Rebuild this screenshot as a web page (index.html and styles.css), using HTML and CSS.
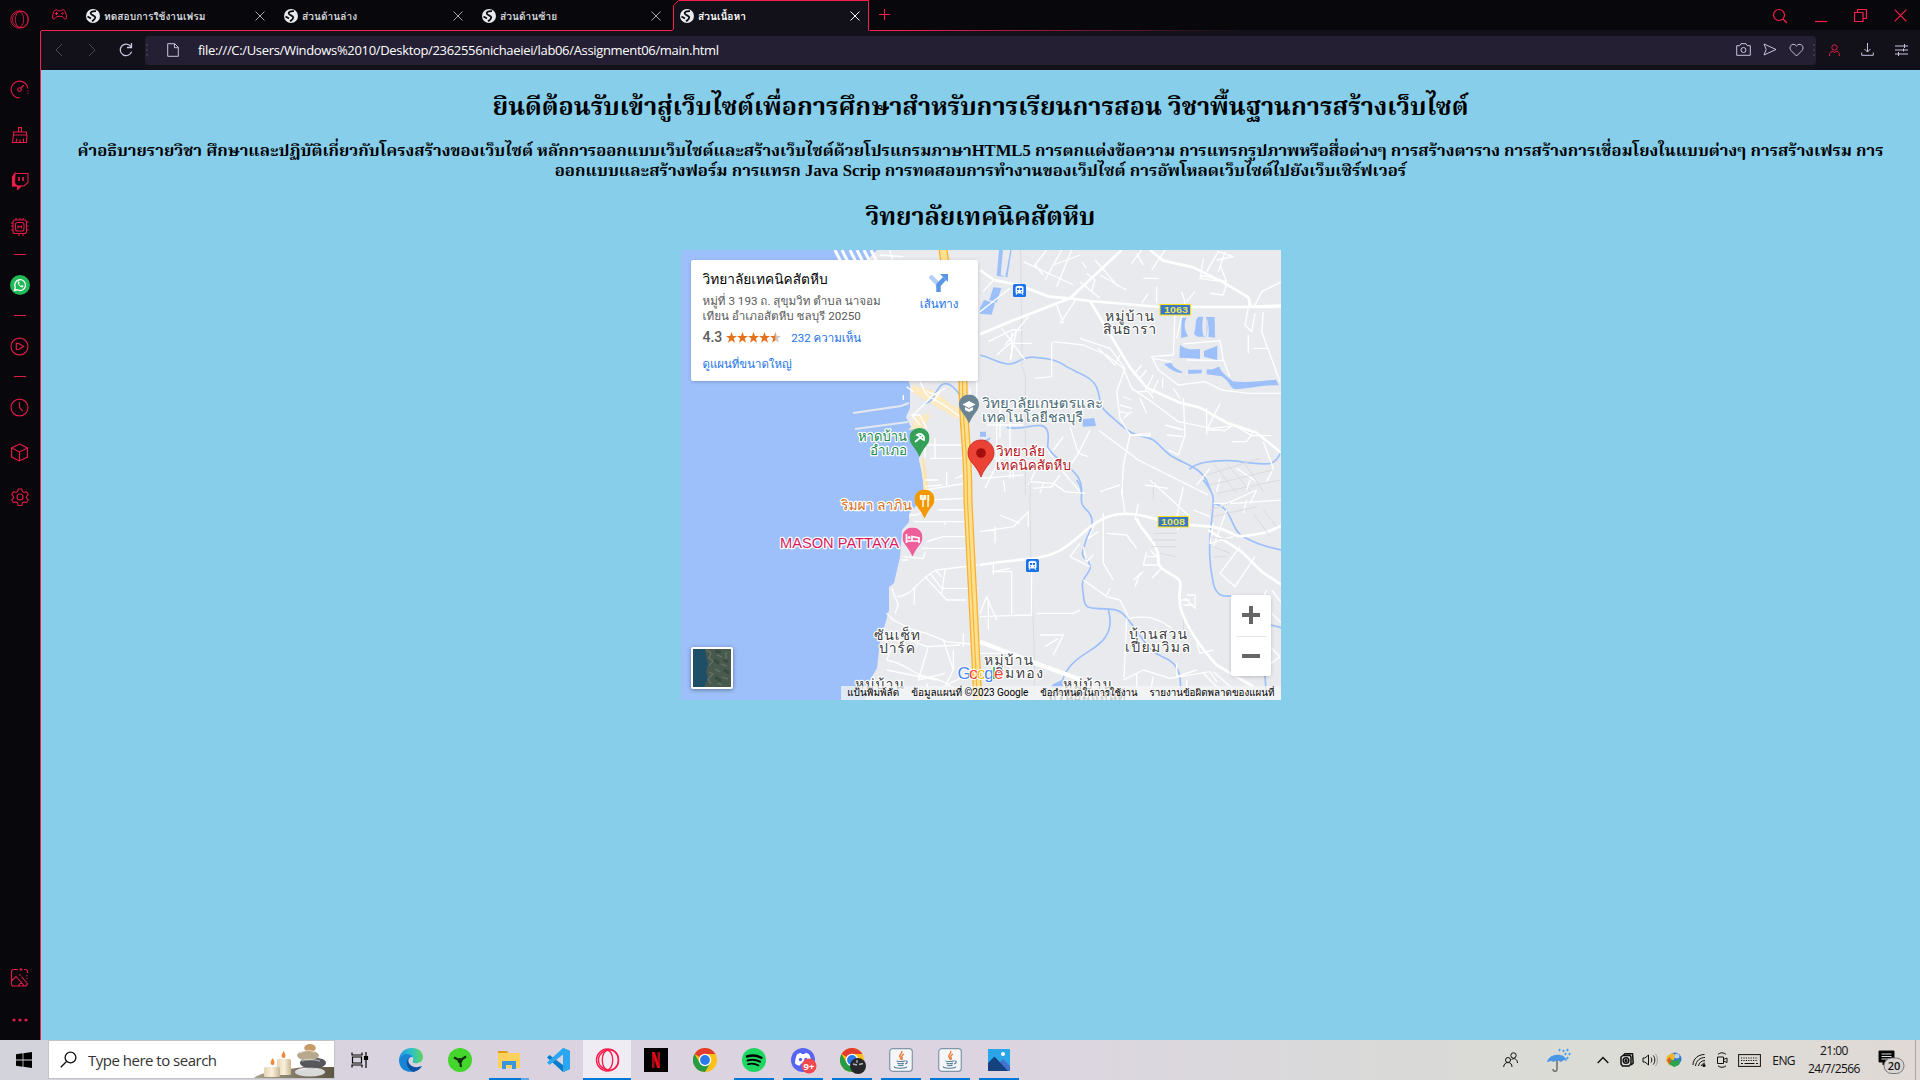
FILE: index.html
```html
<!DOCTYPE html>
<html lang="th">
<head>
<meta charset="utf-8">
<title>ส่วนเนื้อหา</title>
<link rel="stylesheet" href="styles.css">
</head>
<body>
<svg class="defs" width="0" height="0">
  <symbol id="x" viewBox="0 0 12 12"><path d="M1.5 1.5l9 9m0-9l-9 9"/></symbol>
  <symbol id="globe" viewBox="0 0 14 14"><circle cx="7" cy="7" r="7" fill="#e8eaed" stroke="none"/><path d="M10 2.200C6 2 4.200 3.200 4.800 4.800S9.500 6.500 9.300 8.500 7.500 11 6 12.300M1.500 7.500L5 9.500" stroke="#0a0a10" stroke-width="1.800" fill="none"/></symbol>
  <symbol id="opera" viewBox="0 0 24 24"><circle cx="12" cy="12" r="11"/><ellipse cx="12" cy="12" rx="5.2" ry="9.8"/><path d="M9 3c10-4 14 3 14 9s-4 13-14 9M9 3C1 7 1 17 9 21"/></symbol>
  <symbol id="chrome" viewBox="0 0 24 24"><circle cx="12" cy="12" r="12" fill="#fbc116"/><path d="M12 12L1.6 6A12 12 0 0 1 22.4 6H12z" fill="#e33b2e"/><path d="M1.6 6A12 12 0 0 0 12 24l5.2-9L12 12 6.8 15z" fill="#269a45"/><circle cx="12" cy="12" r="6.2" fill="#fff"/><circle cx="12" cy="12" r="4.9" fill="#2b78e9"/></symbol>
  <symbol id="java" viewBox="0 0 24 24"><rect x=".7" y=".7" width="22.6" height="22.6" rx="3" fill="#f5f6f7" stroke="#8296a8" stroke-width="1.2"/><path d="M12.6 3c1.800 2.600-3.600 3.800-1.400 6.400.6.8 1 1.400.6 2.200M15 6.200c-3 1.400-2.400 2.600-1.800 3.600.4.9.1 1.300-.6 2" fill="none" stroke="#e8732c" stroke-width="1.3"/><path d="M7.500 12.800c1 .9 7 .9 8.400 0M8.400 15c1.600 1 5 1 6.400 0M9 17c1.600.8 4 .8 5.600 0M16.400 13c2.600-.5 2.400 2.400-.4 3M5.400 18.400c-1.400 2.400 12 2.400 12.600.3" fill="none" stroke="#4d7896" stroke-width="1.1"/></symbol>
  <symbol id="train" viewBox="0 0 13 13"><rect width="13" height="13" rx="1.6" fill="#1a73e8"/><path d="M3 3.2C3 2 10 2 10 3.200V9H3zM4 9l-1 2m6-2l1 2" fill="#fff" stroke="#fff" stroke-width=".9"/><path d="M4 4h2.100v2H4zM6.900 4H9v2H6.900zM4 7.200h1v1H4zM8 7.200h1v1H8z" fill="#1a73e8"/></symbol>
  <symbol id="pin" viewBox="0 0 20 30"><path d="M10 0C4 0 0 4.400 0 10c0 6 5 8.500 8.500 16l1.500 3 1.500-3C15 18.500 20 16 20 10 20 4.400 16 0 10 0z"/></symbol>
</svg>

<div class="window">
  <aside class="sidebar">
    <div class="logo"><svg width="19" height="21"><use href="#opera"/></svg></div>
    <nav class="shortcuts">
      <span style="height:36px"><svg width="19" height="19" viewBox="0 0 18 18"><path d="M9 17A8 8 0 1 1 17 8M17 10v.8M17 12.500v.8M10.400 7.600L13 5"/><circle cx="9" cy="9" r="1.700"/></svg></span>
      <span style="height:56px"><svg width="18" height="18" viewBox="0 0 18 18"><path d="M7.500 6V1.500h3V6M2.500 9V6h13v3zM2.500 9l-1 7.500h14l.5-7.500M5 16.500l1-4M9 16.500v-3M12.500 16.500v-4"/></svg></span>
      <span style="height:35px"><svg width="18" height="18" viewBox="0 0 18 18"><path d="M4 1.500h13v9L13 14h-3l-3.500 3.500V14H1.500V5z"/><path d="M4 1.500L1.500 5v9h5v3.500L10 14H6L3.500 11z" fill="#fa1e4e"/><path d="M8 5v4M12 5v4" stroke-width="1.700"/></svg></span>
      <span style="height:56px"><svg width="19" height="19" viewBox="0 0 19 19"><rect x="3" y="3" width="13.500" height="13.500" rx="2"/><rect x="5.500" y="5.500" width="8.500" height="8.500" rx="2"/><path d="M8 8.200v3.200M11.400 8.200v3.200M8 9.800h3.400M6 3V1M10 3V1M13 3V1M9 19v-2.500M13 19v-2.500M3 6H1M3 9H1M3 13H1M16.500 5h2M16.500 9h2M16.500 13h2"/></svg></span>
      <i></i>
      <span style="height:60px"><svg width="20" height="20" viewBox="0 0 20 20"><circle cx="10" cy="10" r="10" fill="#21b858" stroke="none"/><path d="M4.500 15.500l.8-3A5.400 5.400 0 1 1 7.500 14.800z" stroke="#fff" stroke-width="1.300"/><path d="M7.600 7c.3 3 2.300 5 5 5.600l1-1.500-1.700-1-.9.800c-1-.5-1.700-1.300-2-2.200l.7-.8-.7-1.600z" fill="#fff" stroke="none"/></svg></span>
      <i></i>
      <span style="height:60px"><svg width="19" height="19" viewBox="0 0 18 18"><circle cx="9" cy="9" r="8"/><path d="M6 6v6l2.500-.4L13 9 8 6z"/></svg></span>
      <i></i>
      <span style="height:60px"><svg width="19" height="19" viewBox="0 0 18 18"><circle cx="9" cy="9" r="8"/><path d="M9 4v5l3 3.500"/></svg></span>
      <span style="height:30px"><svg width="19" height="19" viewBox="0 0 18 18"><path d="M9 1l7.500 3.700v8.600L9 17l-7.500-3.700V4.700zM1.500 4.700L9 8.500l7.500-3.800M9 8.500V17"/></svg></span>
      <span style="height:60px"><svg width="18" height="18" viewBox="0 0 18 18"><path d="M7.200 1h3.600l.6 2.500 1.700 1 2.400-.8 1.800 3-1.900 1.700v1.500l1.900 1.800-1.800 3-2.400-.8-1.700 1-.6 2.600H7.200l-.6-2.600-1.700-1-2.400.8-1.800-3 1.900-1.800V8.400L.7 6.700l1.800-3 2.400.8 1.700-1z"/><circle cx="9" cy="9" r="3"/></svg></span>
    </nav>
    <nav class="side-end">
      <svg width="19" height="20" viewBox="0 0 19 20"><path d="M8 1.500H3.500a2 2 0 0 0-2 2V16a2 2 0 0 0 2 2H15a2 2 0 0 0 2-2M1.500 13L6 8.500 14.500 18M8 18l4-4.500M11.500 8.500l6.500 8M14 1.500h1.500a2 2 0 0 1 2 2V5M11 0v3M9.500 1.500h3M17 7v1.500M17 10v1M10 6v2"/></svg>
      <svg width="16" height="4" viewBox="0 0 16 4"><g fill="#e01c48" stroke="none"><circle cx="2" cy="2" r="1.600"/><circle cx="8" cy="2" r="1.600"/><circle cx="14" cy="2" r="1.600"/></g></svg>
    </nav>
  </aside>

  <div class="main">
    <header class="tabs">
      <svg class="pad" width="15" height="11" viewBox="0 0 15 11"><path d="M4 .8c1.500 0 1.500 1 3.500 1s2-1 3.500-1c2 0 3.400 4 3.400 7.200 0 3-2 2.300-3 .6-.6-1-1.400-1.300-3.900-1.300s-3.300.3-3.900 1.300c-1 1.700-3 2.400-3-.6C.6 4.800 2 .8 4 .8zM4.500 3v3M3 4.500h3"/><circle cx="10.500" cy="4.500" r=".7"/></svg>
      <div class="tab"><svg width="14" height="14"><use href="#globe"/></svg><b>ทดสอบการใช้งานเฟรม</b><svg class="close" width="12" height="12"><use href="#x"/></svg></div>
      <div class="tab"><svg width="14" height="14"><use href="#globe"/></svg><b>ส่วนด้านล่าง</b><svg class="close" width="12" height="12"><use href="#x"/></svg></div>
      <div class="tab"><svg width="14" height="14"><use href="#globe"/></svg><b>ส่วนด้านซ้าย</b><svg class="close" width="12" height="12"><use href="#x"/></svg></div>
      <div class="tab active"><svg class="outline" width="198" height="31" viewBox="0 0 198 31"><path d="M0 30.500l1.500-1.500V5.500l5-5H196.500v30H198V31H1z" fill="#12111a" stroke="none"/><path d="M0 30.500l1.500-1.500V5.500l5-5H196.500v30"/></svg><svg width="14" height="14"><use href="#globe"/></svg><b>ส่วนเนื้อหา</b><svg class="close" width="12" height="12"><use href="#x"/></svg></div>
      <svg class="plus" width="11" height="11" viewBox="0 0 11 11"><path d="M5.500 0v11M0 5.500h11"/></svg>
      <div class="controls">
        <svg width="16" height="16" viewBox="0 0 16 16"><circle cx="7" cy="7" r="5.500"/><path d="M11 11l4 4"/></svg>
        <svg width="12" height="14" viewBox="0 0 12 14"><path d="M0 12.500h12"/></svg>
        <svg width="13" height="13" viewBox="0 0 13 13"><path d="M.5 3.500h8.500v9H.5zM3.500 3.500v-3h9v9H9"/></svg>
        <svg width="13" height="13" viewBox="0 0 13 13"><path d="M.7.7l11.600 11.600M12.300.7L.7 12.300"/></svg>
      </div>
    </header>
    <div class="toolbar">
      <svg class="dim" width="8" height="14" viewBox="0 0 8 14"><path d="M7 1L1 7l6 6"/></svg>
      <svg class="dim" width="8" height="14" viewBox="0 0 8 14"><path d="M1 1l6 6-6 6"/></svg>
      <svg class="reload" width="14" height="14" viewBox="0 0 14 14"><path d="M12.600 8.600A5.800 5.800 0 1 1 11.800 3.500M12.500 0v4.500H8" stroke-width="1.300"/></svg>
      <div class="address">
        <em class="grip"></em>
        <svg width="12" height="14" viewBox="0 0 12 14"><path d="M.7.7h7l3.600 3.600v9H.7zM7.400.7v4h4"/></svg>
        <span class="url">file:///C:/Users/Windows%2010/Desktop/2362556nichaeiei/lab06/Assignment06/main.html</span>
        <div class="actions">
          <svg width="15" height="13" viewBox="0 0 15 13"><path d="M.7 2.700h3l1.300-2h5l1.300 2h3v9.600H.7z"/><circle cx="7.500" cy="7" r="2.500"/></svg>
          <svg width="14" height="13" viewBox="0 0 14 13"><path d="M1 1l12 5.500L1 12l2.200-5.500z"/></svg>
          <svg width="15" height="14" viewBox="0 0 15 14"><path d="M7.500 13L2 7.500C-1 4 3.500-1.500 7.500 3c4-4.500 8.500 1 5.500 4.500z"/></svg>
          <em class="grip"></em>
        </div>
      </div>
      <div class="tools">
        <svg width="11" height="12" viewBox="0 0 11 12" class="red"><circle cx="5.500" cy="3.500" r="2.700"/><path d="M.7 12V9.500L3 7l2.500 1.500L8 7l2.300 2.500V12"/></svg>
        <svg width="13" height="13" viewBox="0 0 13 13"><path d="M6.500 0v9M3.500 6l3 3 3-3M.7 9.500v2.800h11.600V9.500"/></svg>
        <svg width="13" height="12" viewBox="0 0 13 12"><path d="M0 2h13M0 6h13M0 10h13M9.500 0v4M3.500 8v4M8.500 4.500v3"/></svg>
      </div>
    </div>

    <main class="page">
      <h2 class="welcome">ยินดีต้อนรับเข้าสู่เว็บไซต์เพื่อการศึกษาสำหรับการเรียนการสอน วิชาพื้นฐานการสร้างเว็บไซต์</h2>
      <h4><span class="l1">คำอธิบายรายวิชา ศึกษาและปฏิบัติเกี่ยวกับโครงสร้างของเว็บไซต์ หลักการออกแบบเว็บไซต์และสร้างเว็บไซต์ด้วยโปรแกรมภาษาHTML5 การตกแต่งข้อความ การแทรกรูปภาพหรือสื่อต่างๆ การสร้างตาราง การสร้างการเชื่อมโยงในแบบต่างๆ การสร้างเฟรม การ</span><span class="l2">ออกแบบและสร้างฟอร์ม การแทรก Java Scrip การทดสอบการทำงานของเว็ปไซต์ การอัพโหลดเว็บไซต์ไปยังเว็บเซิร์ฟเวอร์</span></h4>
      <h2 class="college">วิทยาลัยเทคนิคสัตหีบ</h2>

      <div class="map">
        <svg class="tiles" width="600" height="450" viewBox="681 250 600 450">
          <rect x="681" y="250" width="600" height="450" fill="#e8eaed"/>
          <path fill="#9dc0fb" d="M681 250H877L865 262 910 385V408L906 417 911 427 919 433 919 460 926 493V494L909 514V522L902 530 900 557 894 583 889 587V610L884 628 880 641 877 668 870 680 865 700H681z"/>
          <g fill="none" stroke="#fff" stroke-width="2.500">
            <path d="M835 250l6 12M842 250l6 12M850 250l6 12M857 250l6 12M864 250l6 12M871 250l6 12" stroke-width="3"/>
            <path d="M853 413l48-7 8-3M855 429l53-7" stroke="#e3e7ee" stroke-width="2.200"/>
          </g>
          <path d="M912 385l22 6 26 20-3 8-45-27zM908 430l18-17 4 3-6 12zM914 417l16-3-9 17-9-3zM944 401l15 7-2 10-18-10zM921 458l2 0 6 39-5-1z" fill="#fbeac2"/>
          <path d="M923 458l6 40-6 16" fill="none" stroke="#fae3a8" stroke-width="2"/>

          <g class="block" transform="translate(980 245) scale(.33333)">
            <path class="lake" d="M57 15l12 0-7 75 14 6 15-81h4L82 97 50 92zM40 127l24 2-14 44-22-8zM12 165l33 10-10 34-35-3v-18zM605 218l15 0c-10 20-7 40 5 56l-22 5zM650 215h20c-5 20-4 58 5 60l5-5c4-17 2-38-2-54h26l1 62-20-3c4-25-2-40-4-54-4 28 4 50-8 54h-18c-12-3-14-10-12-14 8-22-1-32 12-46zM600 300c25 18 40 12 60 12v30l-20-2-42-2zM672 318l40-16v44l-40-11zM552 356l22-2c5 14 20 19 34 27l-2 3c-20-1-40-14-54-28zM624 374h42l-1 11-40 2zM680 373c20 3 30-7 38-8 6 18 18 24 40 44 40 6 110-4 130-5l9 17c-50-2-100 14-137 10-15-12-10-20-35-37l-45-6zM308 523l35-4 5 24-40 2zM0 560h18v15H0z"/>
            <path class="river" d="M0 330c40 10 55 25 85 27s40-25 80-20 60 5 90 25 80 30 95 65 0 50 35 80 60 60 105 68 40 25 80 55 100 30 120 103M628 673c20-20 70-28 120-26s60 12 120 9c20-5 30-20 35-40M80 547c40 10 80-10 105-5s20 40 18 60 60 60 80 80 22 40 22 68M0 590c10-5 25 0 30-12"/>
            <path class="rail" d="M122 15l4 350 10 25M136 390v360"/>
            <path class="main-road" d="M0 268l100-42 170-66 60 8 210 18 363 0M270 160L425 15M330 168l60 100 60 100 50 60 100 45 60 15 80 45 90 30 73 60M510 15l40 32 90 20 90 45 75 45 7 28 91-3M0 75l42 30 75 15 90 35 63 5"/>
            <path class="road" d="M0 200l90-70M10 140l30-35M25 290l70-35 30 0M75 300l70-85M50 330l40-35 65 0M95 260v80M65 250l70 95M110 255l-20 90M200 15l-35 45 25 30M245 15l-50 90M275 15l-45 110M300 30l-80 30M130 50l150 70M305 50l15 20M320 85l25 20-10 35M360 90l80 45M345 45l70 80M300 110l60 50M290 160l-50 75M230 180l20 55M215 290v105l-50 5M220 290l90 10 70 30 50 40 25 60 60 40 80 60 100 20 70-8 50 30 60 0M300 280l90 30 45 60M355 310l50 50 15-30M435 370l-25 70 10 80 30 50-20 90-5 90M430 455l25 10M420 480l35 10M415 500l35 5M430 520l25-20M485 15l-30 40M470 25l20 35M555 15l-40 60M680 80l35-60 45 15-50 10M660 90l80 20-20-50M670 40l-10 60 65 10M735 20l-20 60M490 100h45M505 145l-20 30M530 125v50M590 280l25-110-10-30M620 170l25-30M740 115l-10 35-40-5M810 160l-15 80 20 20 10-55M905 110l-60 30-20 40M850 200l-5 60 55 150M585 200l-5 130-65 5 20 40 60 45 80-10 50 25 80 10 100 0M820 310l45 0M805 270v55M620 345l110 2-10-60-110 10M730 345l20 50M575 350l-60-10M485 360l-25 30M500 375l-25 30M520 390l-25 50M535 405l-20 40M548 400v30M580 430l20 30M475 440l30 0 15 20M480 460l20 45M610 460l5 110-20 60-30-15M555 540l55 15M560 570l50 5M680 490v80M720 475l-40 80 50 0M760 540l-30 20M820 560l-20 30-45 0M850 590l30 80-20 40M330 555l-35 70 30 10M270 545l25 80-20 30M355 555l120 90 210 105M450 570l60 3 0-8-50 5M250 575l-30 40M60 460l0 120M20 540h110M0 640h130M0 700l130-10M50 520v160M90 500v200M75 610l-60 120M100 620v80M200 610l40 60 60 70M240 690l-30 40M165 680l-20 40M650 720l40-50M720 700l-10 40M770 670l60 40"/>
            <path class="rail" d="M700 655l70 90M740 655l80 95M790 650l60 90M680 690l160-50M690 720l190-45M710 745l190-40"/>
          </g>
          <g class="block" transform="translate(980 480) scale(.33333)">
            <path class="river" d="M290 0c30 40 0 60 25 85 35 30 20 60 5 90-20 60-15 50 5 70 20 30-20 40-18 70 5 60 5 70 40 70 40 5 65-5 90 25 60 70 60 100 110 120s55 50 55 100M385 390c20 70-20 100-60 125s-70 50-80 95M670 0c30 40 35 40 25 120s-8 130 5 190c10 40 30 40 55 38M700 70c60 10 50 80 90 100s60 30 115 40M855 588l5 70M873 435l30 8"/>
            <path class="lake" d="M220 612l25-12 5 22-40 2z"/>
            <path class="rail" d="M150 0v100l3 140 10 280v140M520 0v60M610 400v60"/>
            <path class="main-road" d="M0 255c60-10 100-14 145-18 80-8 110-30 160-75s90-65 150-60 90 30 200 35 90 38 145 30 65-10 103-30M470 115c10 40 70 70 65 130 0 30 60 40 65 60s-10 50 5 90 50 100 105 160l110 65M685 150l100 65 60 60 60 40" />
            <path class="main-road highway" d="M0 485l155 60 150 55"/>
            <path class="road" d="M150 5l70 5M190 10l-10 30M160 25l60-5M220 10l35 25 60 5M70 0l5 35M0 155l100-15 45-45v45M60 105l60 25M45 190v-50M35 275h60v130M0 410l155-5 0-160M40 245v40M90 265l-50 10M0 400l20-50 30 70M25 360v90M300 190l-30 40 60 30M310 200l10 45 20-20M355 155l-30 20 20-45M370 100v150l30 50M380 160l60 5 30 40M420 15l-60 20M425 30l10 70M495 15l70 10M475 70l-10 50M510 210l20 20-30 0M540 255l-50 0 10-40M545 265l-30 30M480 280l-15 40M460 300l30-25M310 300l70 50 40 10 25 50M390 325l-10 20M440 415l-8 180M445 415c60-10 90 0 130 30M170 400l110 0 20-10M180 465h70l-30 60M235 475l-40 25M510 0l120 110M630 110l-40 40M640 90l50 20M610 20l-20 90M700 70l60 0 145-10M720 80l110-50M830 30l-20 40M810 0l-10 30M800 60l-10 40M740 90l-40 110M700 130l-10 60 70-20M780 200l-60 80 45 40 60-90M620 345l25 0v40l-30-30M600 360l30 0M610 375h30M650 490l10 30 40-10M860 330l-20 40M875 330l30 40M875 400l30 30M870 500l30 30M430 600l60-30 80 25 120-20 20 30M590 550l0 40 60-20M620 600v60M670 580l80 80M700 575l80 70M330 610l40 40 90 10M470 580l0 60M520 590l-10 50M0 520h80M90 540v50M820 590l80-60"/>
            <path class="rail" d="M520 160h70M515 180h75M515 200h75M540 220l50 10M690 90l60-20M700 110l130-30M700 200l50 20M690 170l60 10M700 230h40M820 100l50 70M850 90l40 50"/>
          </g>
          <g class="block" transform="translate(680 245) scale(.33333)">
            <path class="river" d="M845 465c-10-30-40-60-60-45s-25 55-50 55"/>
            <path class="road" d="M720 410l20 40 60 35 40 30M700 510l60-60 35-20M770 450l-30-10M760 470l20-30M680 425l20 15M670 450v15M720 540l-25-30 25 0 20 40M735 580v60M735 600h110M765 580v60M750 640h100M735 705h40M800 680v40M825 700l30-10M735 735l120-20M745 380l15 30M600 30l70 5M630 15l10 40M870 430v70M890 410v70"/>
          </g>
          <g class="block" transform="translate(680 480) scale(.33333)">
            <path class="road" d="M735 20l50-5M740 60l120-5M775 90h90M700 125h165M690 105l20 0 20-10M795 125v10M740 185l50-15h75M725 205h130M735 215l-5 20-60-5M665 240l20 0M650 350c50 0 70-60 120-80l125-15M705 320c-5 20 0 40-3 55M735 290l65 70h60M750 280l35 45h110M765 270l20 20M795 270l-10 70M635 325l20 50-10 25M620 400l20 20 60 30 40 10 60 25 100 10M600 480h90l50 20 100-5M720 460l-10 40M745 500l-30 100 80-20M640 490l-20 50M620 540c60 10 70 40 120 50s80 30 110 60M620 570l150 30M790 480l30 90-20 40M820 510v60M850 460v40M790 620l60-30M740 610l10 40M580 640l60-20"/>
          </g>

          <path d="M943 248c2 30 18 60 20 133 0 50 5 60 5 120l10 202" fill="none" stroke="#f9b02b" stroke-width="9"/>
          <path d="M943 248c2 30 18 60 20 133 0 50 5 60 5 120l10 202" fill="none" stroke="#fddf90" stroke-width="6.500"/>
          <path d="M962.500 381c0 50 5 60 5 120l10 202" fill="none" stroke="#f9b536" stroke-width="1.200"/>

          <use href="#train" x="1013" y="284" width="13" height="13"/>
          <use href="#train" x="1026" y="559" width="13" height="13"/>
          <g class="shield"><rect x="1160" y="304.500" width="30.500" height="10.500"/><text x="1164" y="313" textLength="24" lengthAdjust="spacingAndGlyphs">1063</text><rect x="1158" y="516.500" width="30.500" height="10.500"/><text x="1161" y="525" textLength="24" lengthAdjust="spacingAndGlyphs">1008</text></g>

          <g class="labels">
            <g class="town"><text x="1105" y="321" textLength="49">หมู่บ้าน</text><text x="1103" y="334" textLength="53">สินธารา</text>
            <text x="874" y="640" textLength="46">ซันเซ็ท</text><text x="879" y="653" textLength="36">ปาร์ค</text>
            <text x="1129" y="639" textLength="58">บ้านสวน</text><text x="1125" y="652" textLength="65">เปี่ยมวิมล</text>
            <text x="984" y="665" textLength="49">หมู่บ้าน</text><text x="996" y="678" textLength="47">ริมทอง</text>
            <text x="855" y="689" textLength="49">หมู่บ้าน</text><text x="1063" y="689" textLength="49">หมู่บ้าน</text><text x="1048" y="700" textLength="78">สุรนิยมแลนด์</text></g>
            <g fill="#4b6b78"><text x="982" y="408" textLength="121" lengthAdjust="spacingAndGlyphs">วิทยาลัยเกษตรและ</text><text x="982" y="422" textLength="101" lengthAdjust="spacingAndGlyphs">เทคโนโลยีชลบุรี</text></g>
            <g fill="#b3151b"><text x="996" y="456" textLength="49" lengthAdjust="spacingAndGlyphs">วิทยาลัย</text><text x="996" y="470" textLength="75" lengthAdjust="spacingAndGlyphs">เทคนิคสัตหีบ</text></g>
            <g fill="#1a8a4a"><text x="858" y="441" textLength="49" lengthAdjust="spacingAndGlyphs">หาดบ้าน</text><text x="870" y="455" textLength="37" lengthAdjust="spacingAndGlyphs">อำเภอ</text></g>
            <text x="841" y="510" fill="#d5701b" textLength="71" lengthAdjust="spacingAndGlyphs">ริมผา ลาภิน</text>
            <text class="hotel" x="780" y="548" textLength="119" lengthAdjust="spacingAndGlyphs">MASON PATTAYA</text>
          </g>
          <use href="#pin" x="909.500" y="428" width="20" height="30" fill="#34a058"/>
          <path d="M914 436.500l.1 0M915 442l7-6M917 435c4-3 8 1 7 5l-2-1-3-3z" stroke="#fff" stroke-width="1.800" fill="none"/>
          <use href="#pin" x="959" y="394.500" width="20" height="30" fill="#6b8594"/>
          <path d="M962.500 404.500l6.500-3.500 6.500 3.500-6.500 3.500zM965 407v3l4 2 4-2v-3l-4 2z" fill="#fff"/>
          <use href="#pin" x="914.500" y="489.500" width="20" height="30" fill="#f29900"/>
          <path d="M922 495v4M924 495v4M920.500 495v4h5v-4M923 499v8M928 495v12M928.500 495v6" stroke="#fff" stroke-width="1.400" fill="none"/>
          <use href="#pin" x="902.500" y="527.500" width="20" height="30" fill="#ed5e9b"/>
          <path d="M906.500 534v9M906.500 541h12.500M919 543v-5l-7-1.500v4" stroke="#fff" stroke-width="1.700" fill="none"/><circle cx="909.200" cy="537.500" r="1.500" fill="#fff"/>
          <path d="M981 440c-8 0-13 6-13 13 0 9 8 11 13 24 5-13 13-15 13-24 0-7-5-13-13-13z" fill="#ea4335" stroke="#c5221f" stroke-width=".8"/><circle cx="981" cy="453" r="4.800" fill="#a50e0e"/>
          <g class="google"><text x="957.500" y="679" textLength="46"><tspan fill="#4285f4">G</tspan><tspan fill="#ea4335">o</tspan><tspan fill="#fbbc05">o</tspan><tspan fill="#4285f4">g</tspan><tspan fill="#34a853">l</tspan><tspan fill="#ea4335">e</tspan></text></g>
        </svg>

        <section class="card">
          <div class="place">
            <h3>วิทยาลัยเทคนิคสัตหีบ</h3>
            <p class="addr"><span>หมู่ที่ 3 193 ถ. สุขุมวิท ตำบล นาจอม</span><span>เทียน อำเภอสัตหีบ ชลบุรี 20250</span></p>
            <p class="rating"><b>4.3</b><svg width="55" height="11" viewBox="0 0 55 11"><path id="st" d="M5.500 0l1.400 4H11L7.700 6.500 9 10.700 5.500 8.200 2 10.700 3.300 6.500 0 4h4.100z" fill="#e7711b"/><use href="#st" x="11"/><use href="#st" x="22"/><use href="#st" x="33"/><path d="M49.500 0l1.400 4H55l-3.300 2.500 1.300 4.200-3.500-2.500z" fill="#c8c8c8"/><path d="M49.500 0v8.200L46 10.700l1.300-4.200L44 4h4.100z" fill="#e7711b"/></svg><a class="reviews">232 ความเห็น</a></p>
            <a class="larger">ดูแผนที่ขนาดใหญ่</a>
          </div>
          <div class="route"><svg width="20" height="20" viewBox="0 0 20 20"><path d="M1 3l8 8v3" stroke="#b3d0f6" stroke-width="4.500"/><path d="M9.500 19v-7l6-6.500" stroke="#5a96e6" stroke-width="4.500"/><path d="M11 1h8v8z" fill="#5a96e6" stroke="none"/></svg><a>เส้นทาง</a></div>
        </section>

        <svg class="satellite" width="42" height="42" viewBox="0 0 42 42"><rect x="0" y="0" width="42" height="42" rx="2" fill="#fff"/><rect x="2" y="2" width="38" height="38" fill="#48594e"/><path d="M2 2h12l1 7 2 8-2 8 2 6-4 9H2z" fill="#1f4f66"/><path d="M15 3l5 3-2 5 4 3-4 5M18 25l4 2-5 5 3 5M26 8l5 2M30 17l6 2M24 22l5 3M31 30l6 2M27 36l4 2M35 5v7" stroke="#6a746b" stroke-width="1.200" fill="none"/><path d="M24 4l6 1M23 13l5 3M33 23l5 3M24 30l6 4M33 13l4 2" stroke="#374b3e" stroke-width="3" fill="none"/></svg>
        <div class="zoom"><svg width="40" height="40" viewBox="0 0 40 40"><path d="M20 11v18M11 20h18"/></svg><svg width="40" height="40" viewBox="0 0 40 40"><path d="M11 20h18"/></svg></div>
        <footer class="legal"><span class="g1">แป้นพิมพ์ลัด</span><span class="g2">ข้อมูลแผนที่ ©2023 Google</span><span class="g3">ข้อกำหนดในการใช้งาน</span><span class="g4">รายงานข้อผิดพลาดของแผนที่</span></footer>
      </div>
    </main>
  </div>
</div>

<footer class="taskbar">
  <div class="start"><svg width="16" height="16" viewBox="0 0 16 16"><path d="M0 2.300L6.600 1.300V7.600H0zM7.400 1.200L16 0v7.600H7.400zM0 8.400h6.600v6.300L0 13.700zM7.400 8.400H16V16l-8.600-1.200z"/></svg></div>
  <div class="search">
    <svg width="17" height="17" viewBox="0 0 17 17"><circle cx="10.500" cy="6.500" r="5.400" fill="none" stroke="#111" stroke-width="1.300"/><path d="M6.500 10.500L.8 16.200" stroke="#111" stroke-width="1.300"/></svg>
    <span>Type here to search</span>
    <svg class="spa" width="80" height="37" viewBox="0 0 80 37"><defs><linearGradient id="wx"><stop stop-color="#e2d2b3"/><stop offset=".5" stop-color="#fbf1dc"/><stop offset="1" stop-color="#c9b692"/></linearGradient><linearGradient id="tb"><stop stop-color="#a8a18e"/><stop offset="1" stop-color="#5d5645"/></linearGradient></defs><path d="M0 37c8-7 30-8 50-11h30v11z" fill="url(#tb)"/><rect x="23" y="18" width="14" height="16" rx="1.500" fill="url(#wx)"/><rect x="10" y="26" width="16" height="10" rx="1.500" fill="url(#wx)"/><path d="M28.500 12c-3 5 3 7 3 2.500 0-2-1.500-3-1.500-4.500zM17.500 19c-3 5 3 7 3 2.500 0-2-1.500-3-1.500-4.500z" fill="#f18a37"/><ellipse cx="56" cy="31" rx="15" ry="4.500" fill="#d9d9da"/><ellipse cx="59" cy="22" rx="13" ry="5.500" fill="#56575a"/><ellipse cx="54" cy="14.500" rx="11" ry="4.800" fill="#b7a98e"/><ellipse cx="56" cy="7" rx="5.800" ry="4" fill="#c79b66"/><path d="M48 20c8-3 14-1 18 0M46 12c4-3 10-3 14-1M45 29c8-3 14-2 19-1" stroke="#fff" stroke-opacity=".45" fill="none" stroke-width="1.500"/></svg>
  </div>
  <nav class="apps">
    <div><svg width="18" height="16" viewBox="0 0 18 16" fill="none" stroke="#000" stroke-width="1.200"><path d="M1 .5v2.500h10V.5M1 15.500V13h10v2.500M1.500 5h9v6h-9zM15 0v4M15 8v8"/><path d="M13.500 4.500h3v3h-3z" fill="#000"/></svg></div>
    <div><svg width="24" height="24" viewBox="0 0 24 24"><defs><linearGradient id="eg"><stop stop-color="#2295dc"/><stop offset=".5" stop-color="#2bc1cc"/><stop offset="1" stop-color="#5fd45b"/></linearGradient></defs><path d="M0 12C1-4 24-3 24 9c0 5-5 7-9 6-3-.8 0-2-1-5C12 5 4 5 0 12z" fill="url(#eg)"/><path d="M0 12C3 4 12 5 13.500 9 10 8 7 14 10 18c3 4 9 3 12 0C17 27 0 26 0 12z" fill="#1784d5"/><path d="M9.500 10c-4 4-1 12 5 14 4-1 7-3 8.500-6-7 3-15 0-13.500-8z" fill="#0f519f"/></svg></div>
    <div><svg width="24" height="24" viewBox="0 0 24 24"><circle cx="12" cy="12" r="12" fill="#44d62c"/><path d="M12 12.500L6 9.500M12 12.500l6-4M12 12.500l1 6.500" stroke="#142b12" stroke-width="2.200"/><circle cx="12" cy="12.500" r="2.500" fill="#142b12"/></svg></div>
    <div class="open more"><svg width="22" height="20" viewBox="0 0 22 20"><path d="M0 1h9l2 3H0z" fill="#e19a18"/><path d="M0 3h22v15H0z" fill="#ffd15c"/><path d="M4 19v-8h14v8h-4v-4H8v4z" fill="#3c95da"/></svg></div>
    <div><svg width="24" height="24" viewBox="0 0 24 24"><path d="M17 0l7 3v18l-7 3L1 9.500 3.500 7 17 17z" fill="#0a7dca"/><path d="M17 0l7 3v18l-7 3V6.500L3.500 17 1 14.500z" fill="#2aa7f0"/></svg></div>
    <div class="open current"><svg width="25" height="24" class="op"><use href="#opera"/></svg></div>
    <div><svg width="24" height="24" viewBox="0 0 24 24"><path d="M0 0h24v24H0z"/><path d="M8 4h2.600v16H8zM13.500 4H16v16h-2.500z" fill="#a50b12"/><path d="M8 4h2.800L16 20h-2.800z" fill="#e40a15"/></svg></div>
    <div><svg width="24" height="24"><use href="#chrome"/></svg></div>
    <div class="open"><svg width="24" height="24" viewBox="0 0 24 24" fill="none" stroke="#000" stroke-linecap="round"><circle cx="12" cy="12" r="12" fill="#1ed760" stroke="none"/><path d="M5 8.500c5-1.600 10-1 14.500 1.300" stroke-width="2.400"/><path d="M5.500 12.500c4.500-1.300 8.500-.8 12.500 1.200" stroke-width="2"/><path d="M6 16.200c4-1 7-.6 10.500 1.200" stroke-width="1.700"/></svg></div>
    <div class="open"><svg class="badged" width="26" height="26" viewBox="0 0 26 26"><circle cx="12" cy="12" r="12" fill="#5865f2"/><path d="M6 6.500c2-1.300 3-1.500 4-1.500l.6 1h3l.6-1c1 0 2.500.3 4 1.500 1.600 3 2 6 2 9-2 1.800-3.500 2-4.500 2l-1.500-2h-4l-1.500 2c-1.500 0-3-.5-4.700-2 0-3 .6-6 2-9z" fill="#fff"/><circle cx="9.500" cy="11.500" r="1.700" fill="#5865f2"/><circle cx="14.800" cy="11.500" r="1.700" fill="#5865f2"/><circle cx="18" cy="18" r="7.500" fill="#f04a50"/><text x="18" y="21.500" text-anchor="middle" font-size="9.500" font-weight="700" fill="#fff">9+</text></svg></div>
    <div class="open"><svg class="badged" width="26" height="26" viewBox="0 0 26 26"><use href="#chrome" width="24" height="24"/><circle cx="18" cy="18" r="8" fill="#26272a"/><path d="M13 16l4 1M19 16.500l4-1M17 12v3" stroke="#b2b5b9" stroke-width="1.300"/></svg></div>
    <div class="open"><svg width="24" height="24"><use href="#java"/></svg></div>
    <div class="open"><svg width="24" height="24"><use href="#java"/></svg></div>
    <div class="open"><svg width="22" height="22" viewBox="0 0 22 22"><path d="M0 0h22v22H0z" fill="#2aa5e8"/><path d="M9 16l6-6 7 7v5H9z" fill="#4173cf"/><path d="M0 14l6.500-6.500L20 22H0z" fill="#15417f"/><circle cx="15" cy="5" r="2" fill="#fff"/></svg></div>
  </nav>
  <div class="tray">
    <svg width="16" height="16" viewBox="0 0 16 16"><circle cx="10.500" cy="3.500" r="2.700"/><circle cx="5" cy="8" r="2.500"/><path d="M.7 15c0-3 2-4.500 4.300-4.500S9 12 9 15M8.500 7.500c3-2 6 0 6 3.500"/></svg>
    <svg width="24" height="24" viewBox="0 0 24 24"><path d="M0 14C2 5 18 4 20 13l-3-1-3 2-4-2-3 2-3-1z" fill="#4a97e8" stroke="none"/><path d="M10 12v9c0 3-4 3-4 0" stroke="#777" stroke-width="1.700"/><path d="M13 1l-1 2M17 2l-1 2M21 1l-1 2M19 5l-1 2M23 5l-1 2M21 9l-1 2" stroke="#489be8" stroke-width="1.700"/></svg>
    <svg width="12" height="8" viewBox="0 0 12 8"><path d="M.7 7L6 1.500 11.300 7" stroke-width="1.400"/></svg>
    <svg width="14" height="14" viewBox="0 0 14 14" stroke-width="1.500"><path d="M3 2.500l2-1.700h7.500L13.200 10l-2 2M1 4l2-1.500h7L11 4v7l-2 2H2.500L1 11z"/><circle cx="6" cy="7.500" r="2.800"/><circle cx="6" cy="7.500" r=".8"/></svg>
    <svg width="16" height="14" viewBox="0 0 16 14"><path d="M1 5h2l3.500-3v10L3 9H1zM9 4.500c1 1.500 1 3.500 0 5M11.300 2.500c2 2.500 2 6.500 0 9"/><path d="M13.500 1c2.500 3 2.500 9 0 12" stroke="#999"/></svg>
    <svg width="16" height="16" viewBox="0 0 16 16"><g stroke="none"><circle cx="9" cy="7" r="6.500" fill="#3478d4"/><path d="M1 4l6-3 3 3-6 10-4-5z" fill="#efb62d"/><path d="M4 7l5 2 5-2-1 6-5 2-5-3z" fill="#29a44a"/><circle cx="11" cy="4" r="2.500" fill="#b6d1e8"/><path d="M1 8l3-3 1 5-2 2z" fill="#e4572c"/></g></svg>
    <svg width="14" height="14" viewBox="0 0 14 14"><path d="M1 12C1 6 6 1.500 12.500 1.500M3.500 13C4 8 8 4.500 13 4.500M6.500 13c.3-3 3-5.500 6.500-5.500M9.500 13c.2-1.600 1.600-3 3.500-3"/><circle cx="12" cy="12.500" r="1.500" fill="#000" stroke="none"/></svg>
    <svg width="12" height="16" viewBox="0 0 12 16"><path d="M1.500 5h6v6.500h-6zM7.500 7.500L11 6v4.500L7.500 9M2 2.500C4 .3 8 .3 10 2.500M2 13.800c2 2 6 2 8 0"/></svg>
    <svg width="23" height="13" viewBox="0 0 23 13"><rect x=".6" y=".6" width="21.800" height="11.800"/><path d="M3 4h17M3 6.500h17" stroke-dasharray="1.200 1.200"/><path d="M3 9.500h2M6.500 9.500h10M18 9.500h2"/></svg>
    <span class="lang">ENG</span>
    <div class="clock"><span>21:00</span><span>24/7/2566</span></div>
    <div class="notes"><svg width="28" height="26" viewBox="0 0 28 26"><path d="M1 2h15v11H8l-3 3v-3H1z" fill="#000"/><path d="M3.500 5h10M3.500 7.500h10M3.500 10h8" stroke="#ddd"/><rect x="6" y="9" width="20" height="15.500" rx="7.700" fill="#d8d4d3" stroke="#777"/><text x="16" y="20.500" text-anchor="middle" stroke="none">20</text></svg></div>
    <i class="desk"></i>
  </div>
</footer>
</body>
</html>
```
FILE: styles.css
```css
* { box-sizing: border-box; }
html, body { margin: 0; height: 100%; overflow: hidden; }
body { display: flex; flex-direction: column; font-family: "Open Sans", "Noto Sans", "Loma", "Noto Sans Thai", sans-serif; }
svg { display: block; flex: none; }
.defs { position: absolute; }
h2, h3, h4, p { margin: 0; }

.window { height: 1040px; display: flex; background: #08070c; }
.sidebar { width: 40px; flex: none; display: flex; flex-direction: column; align-items: center; padding-right: 1px; }
.sidebar svg { fill: none; stroke: #e01c48; stroke-width: 1.1; }
.logo { height: 71px; padding-top: 9px; }
.shortcuts { flex: 1; display: flex; flex-direction: column; align-items: center; }
.shortcuts span { display: flex; align-items: center; justify-content: center; }
.shortcuts i { width: 12px; height: 1px; background: #e01c48; }
.side-end { display: flex; flex-direction: column; align-items: center; gap: 30px; padding-bottom: 18px; }

.main { flex: 1; display: flex; flex-direction: column; min-width: 0; }
.tabs { height: 31px; display: flex; align-items: center; background: linear-gradient(90deg, #fa1e4e 0, #fa1e4e 860px, #12111a 1200px) bottom / 100% 1px no-repeat; border-left: 1px solid #08070c; stroke: #fa1e4e; fill: none; }
.pad { margin: 0 17px 2px 11px; }
.tab { width: 198px; height: 31px; flex: none; display: flex; align-items: center; gap: 4px; padding: 0 16px 0 2px; position: relative; stroke: #a9a9af; color: #d6d6da; }
.tab b { flex: 1; font-size: 10.2px; font-weight: 600; white-space: nowrap; padding-top: 1px; }
.tab > svg:not(.outline) { position: relative; }
.tab.active { padding-left: 8px; margin-left: -6px; color: #fff; stroke: #fff; padding-right: 9px; }
.tab.active b { position: relative; }
.outline { position: absolute; left: 0; top: 0; stroke: #fa1e4e; }
.plus { margin: 0 0 3px 9px; }
.controls { margin-left: auto; display: flex; align-items: center; gap: 27px; padding-right: 13px; stroke-width: 1.2; }

.toolbar { height: 39px; background: #12111a; border-left: 1px solid #fa1e4e; display: flex; align-items: center; padding-left: 14px; gap: 25px; fill: none; stroke: #c9c3dd; }
.toolbar > svg, .tools { margin-bottom: 2px; }
.toolbar .dim { stroke: #4a4757; }
.toolbar .reload { margin-left: -2px; }
.address { flex: none; width: 1671px; height: 29px; margin-left: -13px; border-radius: 4px; background: #241f33; display: flex; align-items: center; padding: 0 1px 2px 1px; }
.grip { width: 2px; height: 12px; background: repeating-linear-gradient(#3d384d 0 2px, transparent 2px 5px); }
.address > svg { margin: 0 19px 0 19px; }
.url { font-size: 13px; color: #fff; letter-spacing: -.33px; white-space: nowrap; }
.actions { margin-left: auto; display: flex; align-items: center; gap: 12px; }
.actions .grip { margin-left: -3px; }
.tools { display: flex; align-items: center; gap: 21px; margin-left: -12px; }
.red { stroke: #e01c48; }

.page { flex: 1; background: #87ceeb; border-left: 1px solid #fa1e4e; display: flex; flex-direction: column; align-items: center; color: #000; font-family: "Liberation Serif", "Norasi", "Noto Serif Thai", "Noto Sans Thai", serif; text-align: center; }
.page h2 { font-size: 25.15px; line-height: 28px; height: 28px; white-space: nowrap; }
.welcome { margin-top: 23px; }
.page h4 { margin: 20px 0 20px; line-height: 20px; }
.page h4 span { display: block; white-space: nowrap; height: 20px; }
.l1 { font-size: 16.64px; }
.l2 { font-size: 16.72px; }
.page .college { margin-top: 2px; font-size: 24.9px; }

.map { width: 600px; height: 450px; margin-top: 19px; position: relative; flex: none; font-family: Roboto, "Loma", "Noto Sans Thai", sans-serif; text-align: left; }
.block { fill: none; stroke-linejoin: round; }
.road { stroke: #fff; stroke-width: 4; }
.main-road { stroke: #fff; stroke-width: 8; }
.highway { stroke-width: 13; }
.river { stroke: #9dc0fb; stroke-width: 5; }
.rail { stroke: #d9dbdf; stroke-width: 3; }
.lake { fill: #9dc0fb; }
.shield rect { fill: #3b76c4; stroke: #fde013; }
.shield text { fill: #e8e45a; font: 700 8.5px "Liberation Sans", sans-serif; }
.labels text { font-size: 14px; stroke: #fff; stroke-width: 2.5px; paint-order: stroke; stroke-linejoin: round; }
.labels .hotel { font: 14px "Liberation Sans", sans-serif; fill: #d81b60; }
.town { fill: #3c4043; }
.google text { font: 17px "Liberation Sans", sans-serif; stroke: #fff; stroke-width: 2px; paint-order: stroke; }

.card { position: absolute; left: 10px; top: 10px; width: 287px; height: 121px; background: #fff; border-radius: 2px; box-shadow: 0 1px 4px -1px rgba(0,0,0,.3); display: flex; justify-content: space-between; padding: 10px 19px 0 12px; white-space: nowrap; font-size: 11.6px; }
.card a { color: #1a73e8; }
.card h3 { font-size: 13.7px; font-weight: 400; line-height: 18px; }
.addr { color: #5b5b5b; margin-top: 6px; font-size: 11.65px; }
.addr span { display: block; height: 15px; line-height: 15px; }
.rating { display: flex; align-items: center; height: 18px; margin-top: 4px; }
.rating b { font-size: 14px; font-weight: 500; color: #5b5b5b; margin-right: 4px; }
.card .reviews { margin: 1px 0 0 10px; font-size: 11.5px; }
.larger { display: block; margin-top: 9px; line-height: 18px; font-size: 11.45px; }
.route { display: flex; flex-direction: column; align-items: center; gap: 2px; padding-top: 3px; fill: none; }
.satellite { position: absolute; left: 10px; top: 397px; filter: drop-shadow(0 1px 2px rgba(0,0,0,.4)); }
.zoom { position: absolute; left: 550px; top: 345px; width: 40px; height: 81px; background: #fff; border-radius: 2px; box-shadow: 0 1px 4px -1px rgba(0,0,0,.3); stroke: #666; stroke-width: 4; }
.zoom svg + svg { margin-top: 1px; background: linear-gradient(#e6e6e6, #e6e6e6) 5px 0 / 30px 1px no-repeat; }
.legal { position: absolute; right: 0; bottom: 0; height: 14px; display: flex; font-size: 10px; line-height: 14px; background: rgba(245,245,245,.75); color: #000; white-space: nowrap; }
.legal span { padding: 0 6px; }
.g2 { letter-spacing: -.05px; }
.g3 { font-size: 9.5px; }
.g4 { font-size: 9.8px; }

.taskbar { height: 40px; display: flex; background: linear-gradient(90deg, #d3d3dc 0, #dbd3df 600px, #dcd5e1 1000px, #d9dad8 1400px, #dbdcd5 1600px, #e0d9d5); color: #111; }
.start { width: 48px; padding: 12px 0 0 16px; }
.search { width: 287px; height: 39px; border: 1px solid #c4c3c8; background: #fff; display: flex; align-items: center; padding-left: 11px; font-size: 15px; }
.search span { margin-left: 11px; letter-spacing: -.5px; color: #333; white-space: nowrap; }
.search .spa { margin-left: auto; }
.apps { display: flex; gap: 1px; margin-left: 1px; }
.apps div { width: 48px; display: flex; align-items: center; justify-content: center; }
.apps div:first-child { margin-right: 2px; }
.badged { margin: 2px 0 0 2px; }
.apps .open { background: linear-gradient(#0078d7, #0078d7) bottom / 40px 2px no-repeat; }
.apps .more { background: linear-gradient(90deg, #0078d7 32px, #62a9e4 32px) 4px 100% / 40px 2px no-repeat; }
.apps .current { background: linear-gradient(#0078d7, #0078d7) bottom / 48px 2px no-repeat #efedf3; }
.op { fill: none; stroke: #fa1e4e; stroke-width: 1.4; }
.tray { margin-left: auto; display: flex; align-items: center; fill: none; stroke: #111; }
.tray > svg { margin-right: 10px; }
.tray > svg:first-child { margin-right: 0; }
.tray > svg:nth-child(2) { margin: 0 26px 0 28px; }
.tray > svg:nth-child(3) { margin-right: 11px; }
.tray > svg:nth-child(4), .tray > svg:nth-child(5) { margin-right: 8px; }
.lang { font-size: 12px; margin: 0 12px 0 1px; letter-spacing: -.6px; }
.clock { width: 54px; display: flex; flex-direction: column; align-items: center; font-size: 12px; line-height: 18px; letter-spacing: -.55px; }
.notes { margin-left: 17px; padding-top: 4px; }
.notes text { font-size: 11px; font-weight: 600; fill: #111; }
.desk { width: 1px; height: 40px; background: #aaa6a4; margin: 0 4px 0 9px; }
```
